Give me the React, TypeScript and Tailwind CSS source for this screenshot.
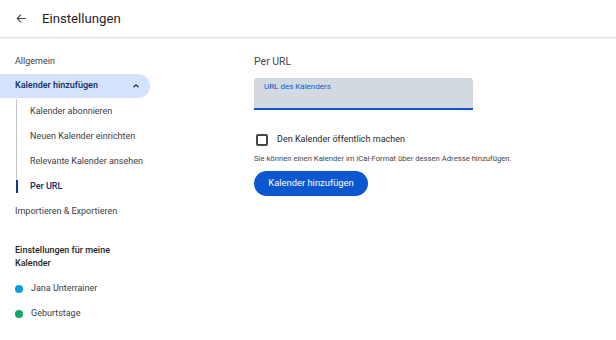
import React from 'react'

function SubItem({ label, active }: { label: string; active?: boolean }) {
  return (
    <div className="relative h-[25px] flex items-center pl-[30px] whitespace-nowrap">
      {active && <div className="absolute left-[16px] top-[6px] h-[13px] w-[2px] bg-[#0b3a8a]" />}
      <span className={active ? 'text-[#0b2a63] font-medium' : 'text-[#3c4043]'}>{label}</span>
    </div>
  )
}

function CalendarRow({ name, color }: { name: string; color: string }) {
  return (
    <div className="h-[25px] flex items-center pl-[15px] gap-[8px] text-[#3c4043]">
      <span className={`w-[8px] h-[8px] rounded-full ${color}`} />
      <span>{name}</span>
    </div>
  )
}

export default function App() {
  return (
    <div className="w-[616px] h-[340px] bg-white overflow-hidden text-[9px] text-[#1f1f1f]" style={{ fontFamily: 'Roboto, Inter, sans-serif' }}>
      <header className="h-[38px] flex items-center border-b border-[#e3e3e3] shadow-[0_1px_1px_rgba(0,0,0,0.04)]">
        <svg className="ml-[15px]" width="13" height="13" viewBox="0 0 24 24" fill="none" stroke="#444746" strokeWidth="2">
          <path d="M20 12H5M11 5l-7 7 7 7" />
        </svg>
        <h1 className="ml-[14px] text-[13.2px] text-[#1f1f1f]">Einstellungen</h1>
      </header>
      <div className="flex">
        <nav className="w-[150px] pt-[11px]">
          <div className="h-[25px] flex items-center pl-[15px] text-[#3c4043]">Allgemein</div>
          <div className="h-[24px] flex items-center justify-between pl-[15px] pr-[9px] bg-[#d3e3fd] rounded-r-full font-medium text-[#0b2a63]">
            <span>Kalender hinzufügen</span>
            <svg width="10" height="10" viewBox="0 0 24 24" fill="none" stroke="#1f1f1f" strokeWidth="2.6">
              <path d="M6 15l6-6 6 6" />
            </svg>
          </div>
          <div className="relative pt-[1px]">
            <div className="absolute left-[16px] top-[1px] bottom-[6px] w-[1px] bg-[#c4c7c5]" />
            <SubItem label="Kalender abonnieren" />
            <SubItem label="Neuen Kalender einrichten" />
            <SubItem label="Relevante Kalender ansehen" />
            <SubItem label="Per URL" active />
          </div>
          <div className="h-[25px] flex items-center pl-[15px] text-[#3c4043]">Importieren &amp; Exportieren</div>
          <div className="pl-[15px] pt-[20px] pb-[6px] font-medium text-[#1f1f1f] leading-[13px] w-[130px]">
            Einstellungen für meine Kalender
          </div>
          <CalendarRow name="Jana Unterrainer" color="bg-[#039be5]" />
          <CalendarRow name="Geburtstage" color="bg-[#0fa968]" />
        </nav>
        <main className="ml-[104px] pt-[16px] w-[280px]">
          <div className="text-[10.5px] text-[#444746] h-[16px] flex items-center">Per URL</div>
          <div className="mt-[8px] w-[219px] h-[32px] bg-[#d3d9e0] rounded-t-[3px] border-b-2 border-[#0b57d0] px-[10px] pt-[3px]">
            <div className="text-[8px] text-[#0b57d0]">URL des Kalenders</div>
          </div>
          <label className="mt-[22px] flex items-center gap-[9px] h-[16px]">
            <span className="ml-[2px] w-[12px] h-[12px] border-2 border-[#444746] rounded-[2px]" />
            <span className="text-[9px] text-[#1f1f1f]">Den Kalender öffentlich machen</span>
          </label>
          <div className="mt-[5px] text-[7.7px] text-[#444746] whitespace-nowrap">
            Sie können einen Kalender im iCal-Format über dessen Adresse hinzufügen.
          </div>
          <button className="mt-[6px] h-[25px] w-[114px] rounded-full bg-[#0b57d0] text-white text-[9.4px]">
            Kalender hinzufügen
          </button>
        </main>
      </div>
    </div>
  )
}
